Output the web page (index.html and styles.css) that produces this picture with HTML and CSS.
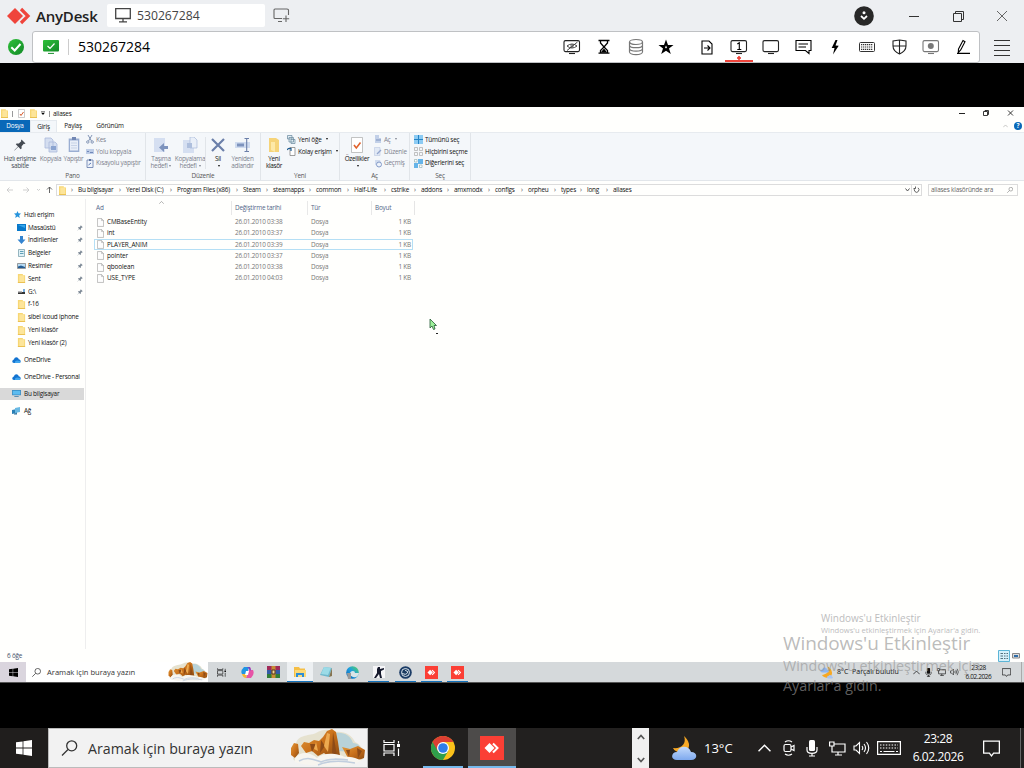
FILE: index.html
```html
<!DOCTYPE html>
<html lang="tr">
<head>
    <meta charset="UTF-8">
    <meta name="viewport" content="width=device-width, initial-scale=1.0">
    <title>AnyDesk</title>
    <link rel="stylesheet" href="styles.css">
</head>
<body>
    <svg class="symbols" width="0" height="0">
        <defs>
            <linearGradient id="rock" x1="0" y1="0" x2="1" y2="1"><stop offset="0" stop-color="#e39a3a"/><stop offset=".5" stop-color="#c9701a"/><stop offset="1" stop-color="#8a4a12"/></linearGradient>
            <linearGradient id="green" x1="0" y1="0" x2="1" y2="1"><stop offset="0" stop-color="#2fc03a"/><stop offset="1" stop-color="#128a28"/></linearGradient>
            <linearGradient id="cloudfill" x1="0" y1="0" x2="0" y2="1"><stop offset="0" stop-color="#c3dafb"/><stop offset="1" stop-color="#7ea9ee"/></linearGradient>
            <linearGradient id="edgefill" x1="0" y1="1" x2="1" y2="0"><stop offset="0" stop-color="#0c59a4"/><stop offset=".5" stop-color="#1b9de2"/><stop offset="1" stop-color="#5bd65a"/></linearGradient>
        </defs>
        <symbol id="mountains" viewBox="0 0 76 38">
            <path d="M6 14C9 5 20 7 26 4C34-1 42 1 46 3C54 2 62 6 65 13C72 16 75 24 73 30C66 38 8 38 3 30Z" fill="#e6e2cf"/>
            <path d="M46 4C54 3 61 7 63 14C68 14 72 18 71 23L46 22Z" fill="#b8d2d8"/>
            <path d="M1 19L4 14L8 15L9 24L5 29L1 26Z" fill="url(#rock)"/>
            <path d="M11 17L14 13L19 14L24 11L29 12L33 8L37 2L42 0L46 3L48 13L50 27L40 29L34 24L28 27L22 22L16 24Z" fill="url(#rock)"/>
            <path d="M52 18L60 20L68 17L75 21L74 29L66 32L58 29Z" fill="url(#rock)"/>
            <path d="M20 15L22 23L26 15ZM31 11L30 24L35 17ZM43 3L42 25L47 27ZM56 21L59 28L60 21ZM67 19L68 29L72 22Z" fill="#8d4b17"/>
            <path d="M37 4L34 17L38 23L40 5ZM26 13L24 20L28 22Z" fill="#edaa50"/>
            <path d="M5 29C12 20 23 25 27 29C35 22 49 25 55 28C63 27 68 31 72 31C65 39 13 38 5 33Z" fill="#f7f5ef"/>
            <path d="M9 32C18 27 25 31 31 33C39 29 49 30 58 31M28 36C40 31 54 32 65 34" fill="none" stroke="#c1cede" stroke-width="1.5"/>
        </symbol>
        <symbol id="weather" viewBox="0 0 26 24">
            <path d="M13 0C16 8 10 13 2 12C5 19 19 18 18 8C17 4 15 2 13 0Z" fill="#f7a824"/>
            <path d="M6 24C-1 24 0 16 6 16C8 9 18 9 20 16C27 16 27 24 20 24Z" fill="url(#cloudfill)"/>
        </symbol>
        <symbol id="weather2" viewBox="0 0 26 24">
            <path d="M15 0C20 9 14 16 4 17C9 26 25 24 24 12C23 5 19 2 15 0Z" fill="#f7a824"/>
            <path d="M5 12C-1 12 0 6 4 6C6 0 14 1 14 6C19 7 19 12 14 12Z" fill="#8db6f2"/>
            <path d="M17 24C13 24 13 19 17 19C19 15 24 17 24 20C27 21 26 24 24 24Z" fill="#a9c6f3"/>
        </symbol>
        <symbol id="winlogo" viewBox="0 0 16 16"><path d="M0 2.3L6.6 1.4V7.6H0ZM7.4 1.3L16 0V7.6H7.4ZM0 8.4H6.6V14.6L0 13.7ZM7.4 8.4H16V16L7.4 14.7Z" fill="currentColor"/></symbol>
        <symbol id="search" viewBox="0 0 16 16"><g fill="none" stroke="currentColor" stroke-width="1.3"><circle cx="10.2" cy="5.8" r="5"/><path d="M6.5 9.5L.5 15.5"/></g></symbol>
        <symbol id="taskview" viewBox="0 0 17 16"><g fill="none" stroke="currentColor" stroke-width="1.2"><path d="M1 0V2.5H11V0M1 16V13H11V16M1 4.5H11V11H1ZM15.5 1V3.5M15.5 8.5V16"/></g><path d="M14 4H17V7H14Z" fill="currentColor"/></symbol>
        <symbol id="folder" viewBox="0 0 8 10"><path d="M0 0H5.5V1.5H8V10H0Z" fill="#f7d774"/><path d="M1.5 1.5H7V9H1.5Z" fill="#fde59a"/><path d="M0 9H8V10H0Z" fill="#e9bf4f"/></symbol>
        <symbol id="page" viewBox="0 0 8 10"><path d="M.5.5H5.2L7.5 2.8V9.5H.5Z" fill="#fdfdfd" stroke="#9a9a9a" stroke-width=".7"/><path d="M5.2.5V2.8H7.5" fill="none" stroke="#9a9a9a" stroke-width=".6"/></symbol>
        <symbol id="pin" viewBox="0 0 12 12"><path d="M7.5.5L11.5 4.5L10.5 5L9.8 4.8L7.6 7.2V9.4L6.6 10.2L4.3 7.8L.6 11.6L.3 11.3L4 7.4L1.8 5.3L2.6 4.4H4.9L7.2 2.2L7 1.4Z" fill="currentColor"/></symbol>
        <symbol id="cloud" viewBox="0 0 10 7"><path d="M2 7C-1 7 0 3 2 3C3-1 7 0 7.500 2.500C10.500 2.500 10.500 7 8 7Z" fill="#1273d0"/><path d="M3 7C3 4 6 3.500 7 4.500C10 4 10.500 7 8 7Z" fill="#41a6ee"/></symbol>
        <symbol id="pc" viewBox="0 0 10 8"><path d="M0 0H10V6H0Z" fill="#2c7fb8"/><path d="M.7.7H9.300V5.300H.7Z" fill="#5dbcf0"/><path d="M2.500 7H7.500V8H2.500Z" fill="#4c86ad"/></symbol>
        <symbol id="chevup" viewBox="0 0 12 7"><path d="M.5 6.500L6 1L11.500 6.500" fill="none" stroke="currentColor" stroke-width="1.300"/></symbol>
        <symbol id="mic" viewBox="0 0 12 17"><rect x="3" y="0" width="6" height="11" rx="1.500" fill="currentColor"/><path d="M1 7V10C1 14.500 11 14.500 11 10V7M6 13V16M3 16H9" fill="none" stroke="currentColor" stroke-width="1.200"/></symbol>
        <symbol id="network" viewBox="0 0 17 15"><path d="M5 3H16V11H3V7M9 11V14M6 14H13M.600 1H5V5H.600ZM3 5V8" fill="none" stroke="currentColor" stroke-width="1.200"/></symbol>
        <symbol id="sound" viewBox="0 0 17 14"><path d="M1 5H3L6.500 1.500V12.500L3 9H1ZM9 5Q10.500 7 9 9M11 3Q14 7 11 11M13.500 1Q18 7 13.500 13" fill="none" stroke="currentColor" stroke-width="1.100"/></symbol>
        <symbol id="notify" viewBox="0 0 16 16"><path d="M.600 1H15.400V12.400H10L8 15L6 12.400H.600Z" fill="none" stroke="currentColor" stroke-width="1.200"/></symbol>
        <symbol id="anydesk" viewBox="0 0 24 24"><path d="M0 0H24V24H0Z" fill="#fb3f35"/><path d="M4.500 12L9.500 7L14.500 12L9.500 17Z" fill="#fff"/><path d="M13 7.500L17.500 12L13 16.500" fill="none" stroke="#fff" stroke-width="2"/></symbol>
        <symbol id="monitor" viewBox="0 0 18 16"><rect x="1" y="1.600" width="15.500" height="11" rx="1.500" fill="none" stroke="currentColor" stroke-width="1.100"/><path d="M6 14.500H12" stroke="currentColor" stroke-width="1.100"/></symbol>
        <symbol id="copy" viewBox="0 0 14 16"><path d="M1 1H7L9 3V11H1ZM5 5H11L13 7V15H5Z" fill="#d4def0" stroke="#a9b9da" stroke-width=".8"/><path d="M7 9H12V13H7Z" fill="#8ba4d0"/></symbol>
    </svg>

    <!-- AnyDesk window -->
    <header class="titlebar">
        <svg class="brand-logo" viewBox="0 0 24 18"><path d="M0 9L8 1L16 9L8 17Z" fill="#ef443b"/><path d="M14 2L21 9L14 16" fill="none" stroke="#ef443b" stroke-width="3.200"/></svg>
        <span class="brand">AnyDesk</span>
        <div class="tab">
            <svg width="16" height="15" viewBox="0 0 16 15" fill="none" stroke="#444"><path d="M.700.700H15.300V10.500H.700ZM8 10.500V13.500M4 13.800H12" stroke-width="1.300"/></svg>
            <span>530267284</span>
        </div>
        <svg class="new-tab" width="17" height="15" viewBox="0 0 17 15" fill="none" stroke="#666" stroke-width="1.100"><path d="M9 10.500H2Q1 10.500 1 9.500V2Q1 1 2 1H14Q15.500 1 15.500 2V7M13 7.500V14M9.800 10.800H16.200M5 13.500H9"/></svg>
        <svg class="discover" width="20" height="20" viewBox="0 0 20 20"><circle cx="10" cy="10" r="9.800" fill="#282828"/><circle cx="10" cy="6.800" r="1.500" fill="#fff"/><path d="M7 10L10 12.800L13 10" fill="none" stroke="#fff" stroke-width="1.800"/></svg>
        <div class="win-buttons">
            <svg width="44" height="12" viewBox="0 0 44 12" stroke="#333"><path d="M17 6.500H27"/></svg>
            <svg width="44" height="12" viewBox="0 0 44 12" fill="none" stroke="#333"><path d="M17.500 3.500H25.500V11.500H17.500ZM19.500 3.500V1.500H27.500V9.500H25.500"/></svg>
            <svg width="44" height="12" viewBox="0 0 44 12" stroke="#666"><path d="M17 1L27 11M27 1L17 11"/></svg>
        </div>
    </header>

    <div class="toolbar">
        <svg class="status" width="16" height="16" viewBox="0 0 16 16"><circle cx="8" cy="8" r="8" fill="url(#green)"/><path d="M3.300 8.300L6.700 11.500L12.500 5" fill="none" stroke="#fff" stroke-width="2"/></svg>
        <div class="address">
            <svg class="online" width="16" height="14" viewBox="0 0 16 14"><rect width="16" height="11.500" rx="1" fill="url(#green)"/><path d="M4.500 6L7 8.300L11.500 3.500" fill="none" stroke="#fff" stroke-width="1.200"/><path d="M5 13.400H11" stroke="#198f2d"/></svg>
            <span class="address-id">530267284</span>
            <div class="tools">
                <span class="tool"><svg width="18" height="16"><use href="#monitor"/><path d="M4 7Q9 3 14 7Q9 11 4 7M4 11.500L14.500 3" fill="none" stroke="#333" stroke-width=".9"/><circle cx="9" cy="7" r="1.200" fill="none" stroke="#333" stroke-width=".7"/></svg></span>
                <span class="tool"><svg width="12" height="16" viewBox="0 0 12 16" fill="none" stroke="#000" stroke-width="1.300"><path d="M.500 1.500H11.500M.500 14.200H11.500M2.500 2V4L6 8L9.500 4V2M6 8L2.500 11.500V14M6 8L9.500 11.500V14"/><path d="M4 13L6 10.500L8 13Z" fill="#000"/></svg></span>
                <span class="tool dim"><svg width="16" height="18" viewBox="0 0 16 18" fill="none" stroke="currentColor" stroke-width="1.200"><ellipse cx="8" cy="4" rx="6.500" ry="2.500"/><path d="M1.500 4V14C2 17.500 14 17.500 14.500 14V4M1.500 7.300C2 10.500 14 10.500 14.500 7.300M1.500 10.600C2 14 14 14 14.500 10.600"/></svg></span>
                <span class="tool star"><svg width="16" height="16" viewBox="0 0 16 16"><path d="M8 .500L10 6H15.500L11 9.400L12.800 15L8 11.700L3.200 15L5 9.400L.500 6H6Z"/><path d="M8 6.500L9 8.500L8 9.500L7 8.500Z" fill="#fff"/></svg></span>
                <span class="tool"><svg width="12" height="15" viewBox="0 0 12 15" fill="none" stroke="#000" stroke-width="1.100"><path d="M1 1H8L11 4V14H1ZM3 8H9M6.500 5.500L9 8L6.500 10.500"/></svg></span>
                <span class="tool active"><svg width="18" height="16"><use href="#monitor"/><path d="M7.300 5L9.300 3.700V10.500M7.300 10.500H11.300" fill="none" stroke="#000" stroke-width="1.100"/></svg></span>
                <span class="tool"><svg width="18" height="16"><use href="#monitor"/></svg></span>
                <span class="tool"><svg width="17" height="16" viewBox="0 0 17 16" fill="none" stroke="#000" stroke-width="1.100"><path d="M1 1.500H16V11.500H14V14.500L10.500 11.500H1ZM3.500 5H13M3.500 8H11"/></svg></span>
                <span class="tool"><svg width="10" height="16" viewBox="0 0 10 16"><path d="M5.500 1H7.500L5.500 6.500L8.700 6.800L3 15.500L4.500 9H1.700Z"/></svg></span>
                <span class="tool"><svg width="16" height="10" viewBox="0 0 16 10" fill="none" stroke="#333"><rect x=".5" y=".5" width="15" height="9" rx="1"/><path d="M2 2.700H14M2 5H14M2 7.400H14" stroke-width="1.200" stroke-dasharray="1.300 .7"/></svg></span>
                <span class="tool"><svg width="15" height="16" viewBox="0 0 15 16" fill="none" stroke="#222" stroke-width="1.100"><path d="M7.500 1L14 2V7Q14 12 7.500 15Q1 12 1 7V2ZM7.500 1V15M1 7H14"/></svg></span>
                <span class="tool dim"><svg width="18" height="16"><use href="#monitor"/><circle cx="8.800" cy="7" r="3" fill="currentColor"/></svg></span>
                <span class="tool"><svg width="14" height="16" viewBox="0 0 14 16" fill="none" stroke="#000" stroke-width="1.100"><path d="M2.500 10L7 1.500L9 2.700L4.700 11L2.300 13.500ZM1 14.400H14"/></svg></span>
            </div>
        </div>
        <svg class="menu" width="16" height="17" viewBox="0 0 16 17" stroke="#333"><path d="M0 1.500H16M0 6.500H16M0 11.500H16M0 16.500H16"/></svg>
    </div>

    <!-- Remote screen -->
    <main class="remote">
        <div class="ex-title">
            <svg class="ex-folder" width="7" height="9"><use href="#folder"/></svg>
            <span class="bar"></span>
            <svg width="7" height="9" class="ex-check" viewBox="0 0 7 9"><path d="M.500.500H6.500V8.500H.500Z" fill="#fff" stroke="#aaa" stroke-width=".6"/><path d="M2 5L3 6.500L5.500 3" fill="none" stroke="#d65a2a"/></svg>
            <svg class="ex-folder2" width="7" height="9"><use href="#folder"/></svg>
            <svg class="ex-drop" width="4" height="5" viewBox="0 0 5 5"><path d="M0 .500H5" stroke="#222"/><path d="M.500 2H4.500L2.500 4.500Z"/></svg>
            <span class="bar"></span>
            <span class="ex-name">aliases</span>
            <div class="ex-buttons">
                <svg width="24" height="8" viewBox="0 0 24 8" stroke="#222"><path d="M9 4.500H15"/></svg>
                <svg width="24" height="8" viewBox="0 0 24 8" fill="none" stroke="#222" stroke-width=".9"><path d="M9.500 2.500H13.500V6.500H9.500ZM11 2.500V1.500H14.500V5.500H13.500"/></svg>
                <svg width="26" height="8" viewBox="0 0 26 8" stroke="#222" stroke-width=".9"><path d="M10 1.500L15 6.500M15 1.500L10 6.500"/></svg>
            </div>
        </div>
        <nav class="ex-tabs">
            <span class="file-tab">Dosya</span>
            <span class="home-tab">Giriş</span>
            <span class="share-tab">Paylaş</span>
            <span class="view-tab">Görünüm</span>
            <svg class="collapse" width="5" height="4"><use href="#chevup"/></svg>
            <span class="help">?</span>
        </nav>
        <section class="ribbon">
            <div class="group pano">
                <div class="group-items">
                    <div class="big w38 gray"><svg width="12" height="12"><use href="#pin"/></svg><span>Hızlı erişime<br>sabitle</span></div>
                    <div class="big w23 muted"><svg width="14" height="16"><use href="#copy"/></svg><span>Kopyala</span></div>
                    <div class="big w23 muted"><svg width="12" height="16" viewBox="0 0 12 16"><path d="M.700 1.500H11.300V15H.700Z" fill="#9aaed2"/><path d="M2 3.500H10V13.500H2Z" fill="#e8eef8"/><path d="M4 0H8V3H4Z" fill="#7388b4"/><path d="M3 6H9M3 8.500H9M3 11H9" stroke="#b9c7e0" stroke-width=".7"/></svg><span>Yapıştır</span></div>
                    <ul class="small-list muted">
                        <li><svg width="8" height="9" viewBox="0 0 8 9" fill="none" stroke="#8496b6"><path d="M2 0L5.500 6M6 0L2.500 6"/><circle cx="1.800" cy="7" r="1.200"/><circle cx="6.200" cy="7" r="1.200"/></svg>Kes</li>
                        <li><svg width="8" height="9" viewBox="0 0 8 9"><path d="M0 2H8V7H0Z" fill="#bdcce6"/><path d="M1 4.500H3M4 5.500H7" stroke="#7188b8"/></svg>Yolu kopyala</li>
                        <li><svg width="8" height="9" viewBox="0 0 8 9"><path d="M1 1H7V8.500H1Z" fill="#eef3fa" stroke="#7086b2" stroke-width=".9"/><path d="M3 0H5V2H3Z" fill="#5a709c"/><path d="M2.500 6L5 4" stroke="#5a78b4"/></svg>Kısayolu yapıştır</li>
                    </ul>
                </div>
                <div class="group-name">Pano</div>
            </div>
            <div class="group duzenle">
                <div class="group-items">
                    <div class="big w28 muted"><svg width="16" height="16" viewBox="0 0 16 16"><path d="M1 1H12V15H1Z" fill="#d5dff1"/><path d="M6 10.500L11 6V9H15V12H11V15Z" fill="#7d93bd"/></svg><span>Taşıma<br>hedefi<i></i></span></div>
                    <div class="big w31 muted"><svg width="16" height="16" viewBox="0 0 16 16"><path d="M1 3H12V16H1Z" fill="#d5dff1"/><path d="M8 0H12L15 3V11H8Z" fill="#e9eff8" stroke="#a9b9da" stroke-width=".7"/><path d="M5 6H10V11H5Z" fill="#aebfdd"/></svg><span>Kopyalama<br>hedefi<i></i></span></div>
                    <span class="divider"></span>
                    <div class="big w24"><svg width="14" height="16" viewBox="0 0 14 16"><path d="M1 2L13 14M13 2L1 14" stroke="#6b7fa9" stroke-width="2.200"/></svg><span>Sil<br><i></i></span></div>
                    <div class="big w25 muted"><svg width="16" height="16" viewBox="0 0 16 16"><path d="M0 5H15V11H0Z" fill="#cfdbef"/><path d="M2 6.500H9V9.500H2Z" fill="#7d93bd"/><path d="M9.500 1.500H14M11.700 1.500V14.500M9.500 14.500H14" stroke="#6b7fa9" stroke-width="1.100"/></svg><span>Yeniden<br>adlandır</span></div>
                </div>
                <div class="group-name">Düzenle</div>
            </div>
            <div class="group yeni">
                <div class="group-items">
                    <div class="big w24"><svg width="12" height="16" viewBox="0 0 12 16"><path d="M1 1H8L11 3V15H1Z" fill="#f6d479"/><path d="M3 5H7V15L3 13Z" fill="#fde9a8"/></svg><span>Yeni<br>klasör</span></div>
                    <ul class="small-list">
                        <li><svg width="9" height="9" viewBox="0 0 9 9"><path d="M.500.500H5V4H.500ZM2 2.500H6.500V7H2ZM4 4.500H8V8.500H4Z" fill="#e3eef5" stroke="#66869b" stroke-width=".7"/></svg>Yeni öğe<i></i></li>
                        <li><svg width="9" height="9" viewBox="0 0 9 9"><path d="M3 .500H8V8.500H3Z" fill="#fff" stroke="#777" stroke-width=".7"/><path d="M0 3Q1 1 4 1.500V4" fill="none" stroke="#1f5d91" stroke-width="1.200"/></svg>Kolay erişim<i></i></li>
                    </ul>
                </div>
                <div class="group-name">Yeni</div>
            </div>
            <div class="group ac">
                <div class="group-items">
                    <div class="big w32"><svg width="12" height="16" viewBox="0 0 12 16"><path d="M.500.500H11.500V15.500H.500Z" fill="#fff" stroke="#aaa" stroke-width=".7"/><path d="M3 8L5.300 11L9.500 5.500" fill="none" stroke="#e0622c" stroke-width="1.600"/></svg><span>Özellikler<br><i></i></span></div>
                    <ul class="small-list muted">
                        <li><svg width="8" height="9" viewBox="0 0 8 9"><path d="M1 0H5V3H7V8H1Z" fill="#c2d0e8"/><path d="M2 5H7" stroke="#7d93bd"/></svg>Aç<i></i></li>
                        <li><svg width="8" height="9" viewBox="0 0 8 9"><path d="M.500.500H6V8.500H.500Z" fill="#e1e9f5" stroke="#bac8e0" stroke-width=".6"/><path d="M3 7L7 3" stroke="#91a5ce" stroke-width="1.300"/></svg>Düzenle</li>
                        <li><svg width="8" height="9" viewBox="0 0 8 9"><path d="M1 1H6L7 3V6H1Z" fill="#d1dcee"/><circle cx="5" cy="5.500" r="2.500" fill="#eef3fa" stroke="#849bc9"/></svg>Geçmiş</li>
                    </ul>
                </div>
                <div class="group-name">Aç</div>
            </div>
            <div class="group sec">
                <div class="group-items">
                    <ul class="small-list">
                        <li><svg width="9" height="9" viewBox="0 0 9 9"><path d="M0 0H9V9H0Z" fill="#8ccbf3"/><path d="M4.500 0V9M0 4.500H9" stroke="#2584c6"/></svg>Tümünü seç</li>
                        <li><svg width="9" height="9" viewBox="0 0 9 9" fill="none" stroke="#a9a9a9" stroke-width=".7"><path d="M.500.500H3.500V3.500H.500ZM5.500.500H8.500V3.500H5.500ZM.500 5.500H3.500V8.500H.500ZM5.500 5.500H8.500V8.500H5.500Z"/></svg>Hiçbirini seçme</li>
                        <li><svg width="9" height="9" viewBox="0 0 9 9"><path d="M4 0H9V5H4ZM0 4H4V9H0Z" fill="#66b4e8"/><path d="M.500.500H3V3H.500ZM5.500 6H8V8.500H5.500Z" fill="#fff" stroke="#8aa" stroke-width=".6"/></svg>Diğerlerini seç</li>
                    </ul>
                </div>
                <div class="group-name">Seç</div>
            </div>
        </section>

        <div class="ex-address">
            <svg class="nav-arrows" width="56" height="10" viewBox="0 0 56 10" fill="none" stroke="#c9c9c9" stroke-width=".9"><path d="M7 5H13M9.500 2.500L7 5L9.500 7.500M23 5H29M26.500 2.500L29 5L26.500 7.500M37 4L38.500 5.500L40 4"/><path d="M49.500 8V2M47 4.500L49.500 2L52 4.500" stroke="#555"/></svg>
            <div class="path">
                <svg width="7" height="9"><use href="#folder"/></svg>
                <div class="crumbs"><span>Bu bilgisayar</span><span>Yerel Disk (C:)</span><span>Program Files (x86)</span><span>Steam</span><span>steamapps</span><span>common</span><span>Half-Life</span><span>cstrike</span><span>addons</span><span>amxmodx</span><span>configs</span><span>orpheu</span><span>types</span><span>long</span><span>aliases</span></div>
                <svg class="path-drop" width="5" height="4" viewBox="0 0 5 4"><path d="M.500.500L2.500 3L4.500.500" fill="none" stroke="#555"/></svg>
                <svg class="refresh" width="10" height="10" viewBox="0 0 9 10" fill="none" stroke="#555" stroke-width=".9"><path d="M6 2.800A2.300 2.500 0 1 1 3 3M3.500 1.500V3.500H1.500"/></svg>
            </div>
            <div class="ex-search"><span>aliases klasöründe ara</span><svg width="6" height="6"><use href="#search"/></svg></div>
        </div>

        <div class="ex-body">
            <aside class="tree">
                <div class="row root"><svg width="7" height="7" viewBox="0 0 7 7"><path d="M3.500 0L4.500 2.300L7 2.500L5.200 4.200L5.700 7L3.500 5.500L1.300 7L1.800 4.200L0 2.500L2.500 2.300Z" fill="#2694dc"/></svg>Hızlı erişim</div>
                <div class="row sub"><svg width="9" height="7" viewBox="0 0 9 7"><path d="M0 0H9V7H0Z" fill="#0879ca"/><path d="M1 1H8V4Z" fill="#35a6ea"/></svg>Masaüstü<svg class="pinned" width="6" height="6"><use href="#pin"/></svg></div>
                <div class="row sub"><svg width="9" height="8" viewBox="0 0 9 8"><path d="M3 0H6V3.500H8.500L4.500 8L.500 3.500H3Z" fill="#3484cf"/></svg>İndirilenler<svg class="pinned" width="6" height="6"><use href="#pin"/></svg></div>
                <div class="row sub"><svg width="9" height="8" viewBox="0 0 9 8"><path d="M1.500.500H7.500V7.500H1.500Z" fill="#dff1f6" stroke="#6f98a5" stroke-width=".7"/><path d="M3 2.500H6.500M3 4.500H6.500" stroke="#3d8ca8" stroke-width=".8"/></svg>Belgeler<svg class="pinned" width="6" height="6"><use href="#pin"/></svg></div>
                <div class="row sub"><svg width="9" height="6" viewBox="0 0 9 6"><path d="M.500.500H8.500V5.500H.500Z" fill="#b8dcf4" stroke="#777" stroke-width=".7"/><path d="M1 3.500L4 2.500L8 4V5H1Z" fill="#245d94"/></svg>Resimler<svg class="pinned" width="6" height="6"><use href="#pin"/></svg></div>
                <div class="row sub"><svg width="9" height="9"><use href="#folder"/></svg>Sent<svg class="pinned" width="6" height="6"><use href="#pin"/></svg></div>
                <div class="row sub"><svg width="9" height="7" viewBox="0 0 9 7"><path d="M1 4H8V6H1Z" fill="#333"/><path d="M1 3H5V4.500H1Z" fill="#bbb"/><path d="M6 1H8V4H6Z" fill="#7baedb"/></svg>G:\<svg class="pinned" width="6" height="6"><use href="#pin"/></svg></div>
                <div class="row sub"><svg width="9" height="9"><use href="#folder"/></svg>f-16</div>
                <div class="row sub"><svg width="9" height="9"><use href="#folder"/></svg>sibel icoud iphone</div>
                <div class="row sub"><svg width="9" height="9"><use href="#folder"/></svg>Yeni klasör</div>
                <div class="row sub"><svg width="9" height="9"><use href="#folder"/></svg>Yeni klasör (2)</div>
                <div class="row drive"><svg width="9" height="6"><use href="#cloud"/></svg>OneDrive</div>
                <div class="row drive"><svg width="9" height="6"><use href="#cloud"/></svg>OneDrive - Personal</div>
                <div class="row drive selected"><svg width="9" height="7"><use href="#pc"/></svg>Bu bilgisayar</div>
                <div class="row drive"><svg width="9" height="8" viewBox="0 0 9 8"><path d="M0 3L5 2V6L0 7Z" fill="#2a7fb5"/><path d="M3 1L8 0V5L3 6Z" fill="#69b9e3"/><path d="M2 6.500L5 6V7.500H2Z" fill="#2a6f9b"/></svg>Ağ</div>
            </aside>
            <div class="files">
                <div class="cols head">
                    <span>Ad<svg class="sort" width="5" height="3"><use href="#chevup"/></svg></span><span>Değiştirme tarihi</span><span>Tür</span><span>Boyut</span>
                </div>
                <div class="cols"><span><svg width="7" height="9"><use href="#page"/></svg>CMBaseEntity</span><span>26.01.2010 03:38</span><span>Dosya</span><span>1 KB</span></div>
                <div class="cols"><span><svg width="7" height="9"><use href="#page"/></svg>int</span><span>26.01.2010 03:37</span><span>Dosya</span><span>1 KB</span></div>
                <div class="cols focus"><span><svg width="7" height="9"><use href="#page"/></svg>PLAYER_ANIM</span><span>26.01.2010 03:39</span><span>Dosya</span><span>1 KB</span></div>
                <div class="cols"><span><svg width="7" height="9"><use href="#page"/></svg>pointer</span><span>26.01.2010 03:37</span><span>Dosya</span><span>1 KB</span></div>
                <div class="cols"><span><svg width="7" height="9"><use href="#page"/></svg>qboolean</span><span>26.01.2010 03:38</span><span>Dosya</span><span>1 KB</span></div>
                <div class="cols"><span><svg width="7" height="9"><use href="#page"/></svg>USE_TYPE</span><span>26.01.2010 04:03</span><span>Dosya</span><span>1 KB</span></div>
            </div>
        </div>

        <div class="ex-status">
            <span>6 öğe</span>
            <svg width="24" height="12" viewBox="0 0 24 12"><path d="M.500.500H11.500V11.500H.500Z" fill="#d6f0fa" stroke="#5cb5d6"/><path d="M2.500 3.500H5M2.500 6H5M2.500 8.500H5M6 3.500H7.500M6 6H7.500M6 8.500H7.500M8.500 3.500H10M8.500 6H10M8.500 8.500H10" stroke="#45616e" stroke-width=".9"/><path d="M14.500 3.500H21.500V8H14.500Z" fill="#ddd" stroke="#888"/><path d="M16 5H20V7H16Z" fill="#2f6da8"/></svg>
        </div>

        <div class="taskbar-small">
            <div class="start"><svg width="9" height="9"><use href="#winlogo"/></svg></div>
            <div class="find">
                <svg width="9" height="9"><use href="#search"/></svg>
                <span>Aramak için buraya yazın</span>
                <svg class="scene" width="40" height="20"><use href="#mountains"/></svg>
            </div>
            <div class="apps">
                <span><svg width="9" height="9"><use href="#taskview"/></svg></span>
                <span><svg width="13" height="13" viewBox="0 0 13 13"><path d="M3 1H8L6 8H1Q-1 5 3 1Z" fill="#2196e3"/><path d="M8 1Q10 1 10 4H12Q14 8 10 12H5L8 4Z" fill="#e653a6"/><path d="M1 8H6L5 12Q2 12 1 8Z" fill="#f5b53a"/><path d="M6 1H9L10 5Z" fill="#6d48cb"/><path d="M5 5H8L7 9H4Z" fill="#fff"/></svg></span>
                <span><svg width="13" height="12" viewBox="0 0 13 12"><path d="M0 0H13V4H0Z" fill="#a12a58"/><path d="M0 4H13V8H0Z" fill="#335ba7"/><path d="M0 8H13V12H0Z" fill="#317c37"/><path d="M4.500 0H8.500V12H4.500Z" fill="#c78d34"/><path d="M5 4H8V8H5Z" fill="#f2d990" stroke="#532"/></svg></span>
                <span class="open"><svg width="12" height="11" viewBox="0 0 12 11"><path d="M0 0H5L6 1.500H11V10H0Z" fill="#f5bf46"/><path d="M1 3H12V10H1Z" fill="#fbd976"/><path d="M2 6H10V10H8V8H4V10H2Z" fill="#2e8ed4"/></svg></span>
                <span><svg width="13" height="12" viewBox="0 0 13 12"><path d="M4 1L12 2L9 11L0 9Z" fill="#6fb8cc"/><path d="M4 1L11 1.700L8 9L1 8Z" fill="#9bdbe7"/><path d="M12 2V10L9 11Z" fill="#857450"/></svg></span>
                <span><svg width="13" height="13" viewBox="0 0 13 13"><circle cx="6.500" cy="6.500" r="6.300" fill="url(#edgefill)"/><path d="M4 8Q4 5 7 5Q9 5 9 7H13Q12 12 7 11Q4 10 4 8Z" fill="#d9e6e8"/><path d="M1 7H5V13H2Z" fill="#999"/></svg></span>
                <span class="running"><svg width="12" height="12" viewBox="0 0 12 12"><path d="M0 0H12V12H0Z" fill="#f6f6f8"/><path d="M5 1H7V3L11 2V3.500L8 5V8L9 12H7L6 8L3 12H1L4 7V3Z" fill="#15192c"/></svg></span>
                <span class="running"><svg width="13" height="13" viewBox="0 0 13 13"><circle cx="6.500" cy="6.500" r="6.300" fill="#1b3c66"/><circle cx="6.500" cy="6.500" r="4" fill="#18395f" stroke="#dce6ee"/><path d="M3 7Q7 10 9 6L6 4" fill="none" stroke="#dce6ee"/></svg></span>
                <span class="running"><svg width="13" height="13"><use href="#anydesk"/></svg></span>
                <span class="running"><svg width="13" height="13"><use href="#anydesk"/></svg></span>
            </div>
            <div class="tray">
                <svg width="13" height="13"><use href="#weather2"/></svg>
                <span class="forecast">8°C&nbsp; Parçalı bulutlu</span>
                <svg class="t-chev" width="7" height="5"><use href="#chevup"/></svg>
                <svg class="t-mic" width="7" height="9"><use href="#mic"/></svg>
                <svg class="t-net" width="9" height="8"><use href="#network"/></svg>
                <svg class="t-sound" width="9" height="8"><use href="#sound"/></svg>
                <div class="clock">23:28<br>6.02.2026</div>
                <svg class="t-note" width="9" height="9"><use href="#notify"/></svg>
            </div>
        </div>

        <svg class="cursor" width="9" height="17" viewBox="0 0 9 17"><path d="M1 1V10L3 8L4.500 11.500L6 11L5 7.500H7.500Z" fill="#9df29a" stroke="#245a35" stroke-width=".8"/><path d="M7 15.500H9" stroke="#222"/></svg>
        <div class="activate-small">
            <p class="line1">Windows'u Etkinleştir</p>
            <p class="line2">Windows'u etkinleştirmek için Ayarlar'a gidin.</p>
        </div>
    </main>

    <!-- Local taskbar -->
    <footer class="taskbar">
        <div class="start"><svg width="16" height="16"><use href="#winlogo"/></svg></div>
        <div class="find">
            <svg width="17" height="16"><use href="#search"/></svg>
            <span>Aramak için buraya yazın</span>
            <svg class="scene" width="76" height="38"><use href="#mountains"/></svg>
        </div>
        <span class="app view"><svg width="17" height="16"><use href="#taskview"/></svg></span>
        <span class="app chrome"><svg width="24" height="24" viewBox="0 0 24 24"><circle cx="12" cy="12" r="12" fill="#fbc11a"/><path d="M12 12L1.600 6A12 12 0 0 0 12 24L17.200 15Z" fill="#2f9e4b"/><path d="M12 6H22.400A12 12 0 0 0 1.600 6L6.800 15L12 12Z" fill="#dc3f33"/><circle cx="12" cy="12" r="6" fill="#fff"/><circle cx="12" cy="12" r="4.800" fill="#2f7de9"/></svg></span>
        <span class="app desk"><svg width="24" height="24"><use href="#anydesk"/></svg></span>
        <div class="scroller">
            <svg width="8" height="6" viewBox="0 0 8 6"><path d="M.800 5L4 1.500L7.200 5" fill="none" stroke="#555" stroke-width="1.700"/></svg>
            <svg width="8" height="6" viewBox="0 0 8 6"><path d="M.800 1L4 4.500L7.200 1" fill="none" stroke="#555" stroke-width="1.700"/></svg>
        </div>
        <div class="tray">
            <svg width="26" height="24"><use href="#weather"/></svg>
            <span class="degrees">13°C</span>
            <svg class="t-chev" width="13" height="8"><use href="#chevup"/></svg>
            <svg class="t-meet" width="12" height="16" viewBox="0 0 12 16" fill="none" stroke="#fff" stroke-width="1.200"><rect x="1" y="4.500" width="7" height="7" rx="1.500"/><path d="M8 7L11 5.500V10.500L8 9M2 2Q5.500-.500 9 2M2 14Q5.500 16.500 9 14"/></svg>
            <svg class="t-mic" width="12" height="17"><use href="#mic"/></svg>
            <svg class="t-net" width="17" height="15"><use href="#network"/></svg>
            <svg class="t-sound" width="17" height="14"><use href="#sound"/></svg>
            <svg class="t-keys" width="24" height="14" viewBox="0 0 24 14" fill="none" stroke="#fff" stroke-width="1.200"><path d="M.600.600H23.400V13.400H.600Z"/><path d="M3 4H21M3 7H21" stroke-dasharray="1.500 1.400"/><path d="M3 10.500H5M6.500 10.500H17.500M19 10.500H21"/></svg>
            <div class="clock">23:28<br>6.02.2026</div>
            <svg class="t-note" width="17" height="17"><use href="#notify"/></svg>
        </div>
    </footer>

    <div class="activate">
        <p class="line1">Windows'u Etkinleştir</p>
        <p class="line2">Windows'u etkinleştirmek için</p>
        <p class="line2">Ayarlar'a gidin.</p>
    </div>
</body>
</html>
```
FILE: styles.css
```css
* {
    box-sizing: border-box;
}

body {
    margin: 0;
    width: 1024px;
    height: 768px;
    overflow: hidden;
    background-color: #000;
    font-family: "Open Sans", "Noto Sans", sans-serif;
    color: #222;
    white-space: nowrap;
}

svg {
    display: block;
    flex: none;
}

p, ul {
    margin: 0;
    padding: 0;
    list-style: none;
}

.symbols {
    position: absolute;
}

/* AnyDesk window */
.titlebar {
    display: flex;
    align-items: center;
    height: 31px;
    background-color: #edeff2;
}

.brand-logo {
    width: 24px;
    height: 18px;
    margin-left: 7px;
}

.brand {
    width: 76px;
    padding-left: 5px;
    font-size: 15px;
    font-weight: 600;
    letter-spacing: -0.2px;
}

.tab {
    display: flex;
    align-items: center;
    gap: 6px;
    width: 158px;
    height: 23px;
    padding-left: 8px;
    border-radius: 2px;
    background-color: #fff;
    font-size: 12.2px;
    color: #444;
}

.new-tab {
    margin-left: 8px;
}

.discover {
    margin-left: auto;
    margin-right: 18px;
}

.win-buttons {
    display: flex;
    width: 132px;
}

.toolbar {
    display: flex;
    align-items: center;
    height: 32px;
    background-color: #edeff2;
}

.status {
    margin: 0 8px 0 8px;
}

.address {
    display: flex;
    align-items: center;
    width: 948px;
    height: 32px;
    padding-left: 10px;
    border: 1px solid #bfc1c4;
    border-radius: 3px;
    background-color: #fff;
}

.address-id {
    margin-left: 9px;
    padding-left: 9px;
    border-left: 1px solid #ccc;
    font-size: 14px;
    line-height: 16px;
    color: #000;
}

.tools {
    display: flex;
    height: 30px;
    margin-left: auto;
}

.tool {
    display: flex;
    align-items: center;
    justify-content: center;
    width: 32px;
}

.tool.star {
    width: 27px;
    margin-right: 12px;
}

.tool.dim {
    color: #777;
}

.tool.active {
    width: 28px;
    margin: 0 2px;
    border-bottom: 2px solid #ef443b;
    padding-top: 2px;
    background: radial-gradient(circle at 14px 26px, #ef443b 1.5px, transparent 2px);
}

.menu {
    margin-left: 14px;
}

/* Remote screen */
.remote {
    position: relative;
    display: flex;
    flex-direction: column;
    height: 576px;
    margin-top: 44px;
    background-color: #fffffd;
    font-size: 6.4px;
    line-height: 8px;
    letter-spacing: -0.2px;
    color: #111;
}

.ex-title {
    display: flex;
    align-items: center;
    height: 13px;
}

.bar {
    width: 1px;
    height: 6px;
    background-color: #999;
}

.ex-folder {
    margin: 0 4px 0 1px;
}

.ex-check {
    margin-left: 5px;
}

.ex-folder2 {
    margin: 0 4px 0 5px;
}

.ex-drop {
    margin-right: 4px;
}

.ex-name {
    margin-left: 3px;
}

.ex-buttons {
    display: flex;
    margin-left: auto;
    padding-bottom: 2px;
}

.ex-tabs {
    display: flex;
    align-items: center;
    height: 12px;
}

.file-tab {
    width: 30px;
    height: 12px;
    line-height: 12px;
    text-align: center;
    background-color: #0968b8;
    color: #fff;
}

.home-tab {
    width: 27px;
    height: 12px;
    line-height: 11px;
    text-align: center;
    border: 1px solid #e4e9ee;
    border-bottom: 0;
    background-color: #f4f7fa;
}

.share-tab {
    width: 32px;
    text-align: center;
}

.view-tab {
    width: 42px;
    text-align: center;
}

.collapse {
    margin-left: auto;
    color: #999;
}

.help {
    width: 8px;
    height: 8px;
    margin: 0 2px 0 6px;
    border-radius: 50%;
    background-color: #0968b8;
    color: #fff;
    font-weight: bold;
    text-align: center;
}

.ribbon {
    display: flex;
    height: 49px;
    border-top: 1px solid #e7ebef;
    border-bottom: 1px solid #e2e6ea;
    background-color: #f4f7fa;
}

.group {
    border-right: 1px solid #e1e5e9;
}

.pano {
    width: 146px;
}

.duzenle {
    width: 115px;
}

.yeni {
    width: 79px;
}

.ac {
    width: 70px;
}

.sec {
    width: 61px;
}

.group-items {
    display: flex;
    height: 38px;
    padding: 4px 0 0 1px;
}

.group-name {
    text-align: center;
    line-height: 10px;
    color: #555;
}

.big {
    display: flex;
    flex-direction: column;
    align-items: center;
    text-align: center;
    line-height: 7px;
    letter-spacing: -0.3px;
}

.big svg {
    height: 16px;
    margin-bottom: 2px;
}

.muted {
    color: #7d828e;
}

.gray {
    color: #444a52;
}

.w38 { width: 38px; }
.w23 { width: 23px; }
.w24 { width: 24px; }
.w25 { width: 25px; }
.w28 { width: 28px; }
.w31 { width: 30px; }
.w32 { width: 32px; }

.ribbon i {
    display: inline-block;
    border: 1.5px solid transparent;
    border-top: 2px solid;
    border-bottom: 0;
    border-top-color: currentColor;
    margin: 0 0 1px 2px;
}

.divider {
    width: 1px;
    height: 32px;
    background-color: #e1e5e9;
}

.small-list {
    margin-top: -3px;
    padding-left: 1px;
}

.small-list li {
    display: flex;
    align-items: center;
    gap: 2px;
    height: 11.8px;
}

.sec .small-list {
    padding-left: 3px;
}

.ex-address {
    display: flex;
    align-items: center;
    height: 18px;
}

.path {
    display: flex;
    align-items: center;
    width: 866px;
    height: 12px;
    padding-left: 2px;
    border: 1px solid #dcdcdc;
}

.crumbs {
    display: grid;
    grid-template-columns: 48px 51px 66px 30px 43px 38px 37px 30px 33px 41px 33px 33px 26px 26px 30px;
    padding-left: 12px;
}

.crumbs span::before {
    content: "›";
    display: inline-block;
    width: 7px;
    margin-left: -7px;
    color: #444;
}

.path-drop {
    margin-left: auto;
}

.refresh {
    margin-left: 1px;
    border-left: 1px solid #ddd;
}

.ex-search {
    display: flex;
    align-items: center;
    justify-content: space-between;
    width: 90px;
    height: 12px;
    margin-left: 6px;
    padding: 0 4px 0 2px;
    border: 1px solid #dcdcdc;
    color: #666;
}

.ex-body {
    display: flex;
    height: 450px;
}

.tree {
    width: 86px;
    padding-top: 9.5px;
    border-right: 1px solid #eee;
}

.row {
    display: flex;
    align-items: center;
    width: 84px;
    height: 12.8px;
}

.row svg {
    margin-right: 2px;
}

.root {
    padding-left: 14px;
}

.root svg {
    margin-right: 3px;
}

.sub {
    padding-left: 17px;
}

.row .pinned {
    margin-left: auto;
    margin-right: 1px;
    color: #7b8794;
}

.drive {
    height: 12px;
    margin-top: 5px;
    padding-left: 12px;
}

.row.drive svg {
    margin-right: 3px;
}

.sub + .drive {
    margin-top: 4.5px;
}

.selected {
    background-color: #d9d9d9;
}

.files {
    width: 329px;
    padding-left: 8px;
}

.cols {
    display: grid;
    grid-template-columns: 141px 76px 64px 38px;
    align-items: center;
    width: 319px;
    height: 11.25px;
    color: #777;
}

.cols span:first-child {
    display: flex;
    align-items: center;
    gap: 3px;
    padding-left: 3px;
    color: #111;
    letter-spacing: -0.1px;
}

.cols span:last-child {
    padding-right: 2px;
    text-align: right;
}

.cols.head {
    height: 17px;
    width: 321px;
    margin-bottom: 0.5px;
}

.cols.head span {
    height: 14px;
    margin-left: -4px;
    padding-left: 3px;
    border-left: 1px solid #e8e8e8;
    line-height: 14px;
    color: #52668a;
    text-align: left;
}

.cols.head span:first-child {
    margin-left: 0;
    padding-left: 2px;
    border-left: 0;
    gap: 55px;
    color: #52668a;
}

.cols.head span:last-child {
    width: 44px;
    border-right: 1px solid #e5e5e5;
}

.cols .sort {
    color: #777;
    margin-top: -11px;
}

.cols.focus {
    outline: 1px solid #b5dff5;
    outline-offset: -1px;
}

.ex-status {
    display: flex;
    justify-content: space-between;
    align-items: center;
    height: 13px;
    padding: 0 2px 0 7px;
    color: #45516a;
}

.taskbar-small {
    display: flex;
    height: 21px;
    background-color: #d5d9db;
    border-bottom: 1px solid #555;
    letter-spacing: 0;
}

.start {
    display: flex;
    align-items: center;
    justify-content: center;
    width: 26px;
    background-color: #dad5de;
    color: #000;
}

.find {
    display: flex;
    align-items: center;
    width: 182px;
    padding-left: 6px;
    background-color: #fff;
    font-size: 7.6px;
    color: #333;
}

.find span {
    margin-left: 6px;
}

.scene {
    margin-left: auto;
}

.apps {
    display: flex;
}

.apps span {
    display: flex;
    align-items: center;
    justify-content: center;
    width: 26.3px;
}

.apps .open {
    background-color: #edf0f2;
    box-shadow: inset 0 -1px #1272bc;
}

.apps .running {
    background: linear-gradient(#1272bc, #1272bc) center bottom / 21px 1px no-repeat;
}

.tray {
    display: flex;
    align-items: center;
    margin-left: auto;
    margin-right: 2px;
    padding-right: 10px;
    border-right: 1px solid #aaa;
    font-size: 7px;
    color: #111;
}

.forecast {
    width: 80px;
    padding-left: 4px;
}

.t-mic {
    margin-left: 5px;
}

.t-net {
    margin-left: 5px;
}

.t-sound {
    margin-left: 4px;
}

.clock {
    width: 37px;
    margin-left: 1px;
    font-size: 6.5px;
    line-height: 9px;
    text-align: center;
    letter-spacing: -0.4px;
}

.t-note {
    margin-left: 5px;
}

.cursor {
    position: absolute;
    left: 429px;
    top: 211px;
}

/* Activation watermarks lie over everything */
.activate-small {
    position: absolute;
    left: 821px;
    top: 505px;
    letter-spacing: 0;
    color: #bdbdbd;
}

.activate-small .line1 {
    font-size: 10px;
    line-height: 13px;
}

.activate-small .line2 {
    font-size: 7.6px;
    line-height: 11px;
}

.activate {
    position: absolute;
    left: 783px;
    top: 630px;
    color: rgba(150, 150, 150, 0.65);
}

.activate .line1 {
    font-size: 19px;
    line-height: 26px;
    letter-spacing: -0.1px;
}

.activate .line2 {
    font-size: 14.3px;
    line-height: 20px;
}

/* Local taskbar */
.taskbar {
    display: flex;
    height: 40px;
    margin-top: 45px;
    background-color: #22201f;
    color: #fff;
}

.taskbar .start {
    width: 48px;
    background-color: #201e1d;
    color: #fff;
}

.taskbar .find {
    width: 320px;
    padding: 0 1px 0 12px;
    border: 1px solid #bbb;
    background-color: #f2f2f2;
    font-size: 14.2px;
}

.taskbar .find span {
    margin-left: 10px;
}

.app {
    display: flex;
    align-items: center;
    justify-content: center;
    width: 48px;
}

.view {
    padding-right: 2px;
}

.chrome {
    width: 40px;
    margin: 0 5px 0 7px;
    border-bottom: 2px solid #76b9ed;
    padding-top: 2px;
}

.desk {
    background-color: #4d4b4a;
    border-bottom: 2px solid #76b9ed;
    padding-top: 2px;
}

.scroller {
    display: flex;
    flex-direction: column;
    align-items: center;
    justify-content: space-between;
    width: 17px;
    margin-left: 116px;
    padding: 6px 0 5px;
    background-color: #f0f0f0;
}

.taskbar .tray {
    margin-left: 22px;
    margin-right: 3px;
    padding-right: 0;
    width: 350px;
    font-size: 13px;
    color: #fff;
    border-color: #666;
}

.degrees {
    width: 54px;
    padding-left: 7px;
}

.t-meet {
    margin-left: 12px;
}

.taskbar .t-chev {
    margin-left: 7px;
}

.taskbar .t-mic {
    margin-left: 11px;
}

.taskbar .t-net {
    margin-left: 11px;
}

.taskbar .t-sound {
    margin-left: 7px;
}

.t-keys {
    margin-left: 7px;
}

.taskbar .clock {
    width: 54px;
    margin-left: 10px;
    font-size: 12px;
    line-height: 18px;
}

.taskbar .t-note {
    margin-left: 18px;
}
```
